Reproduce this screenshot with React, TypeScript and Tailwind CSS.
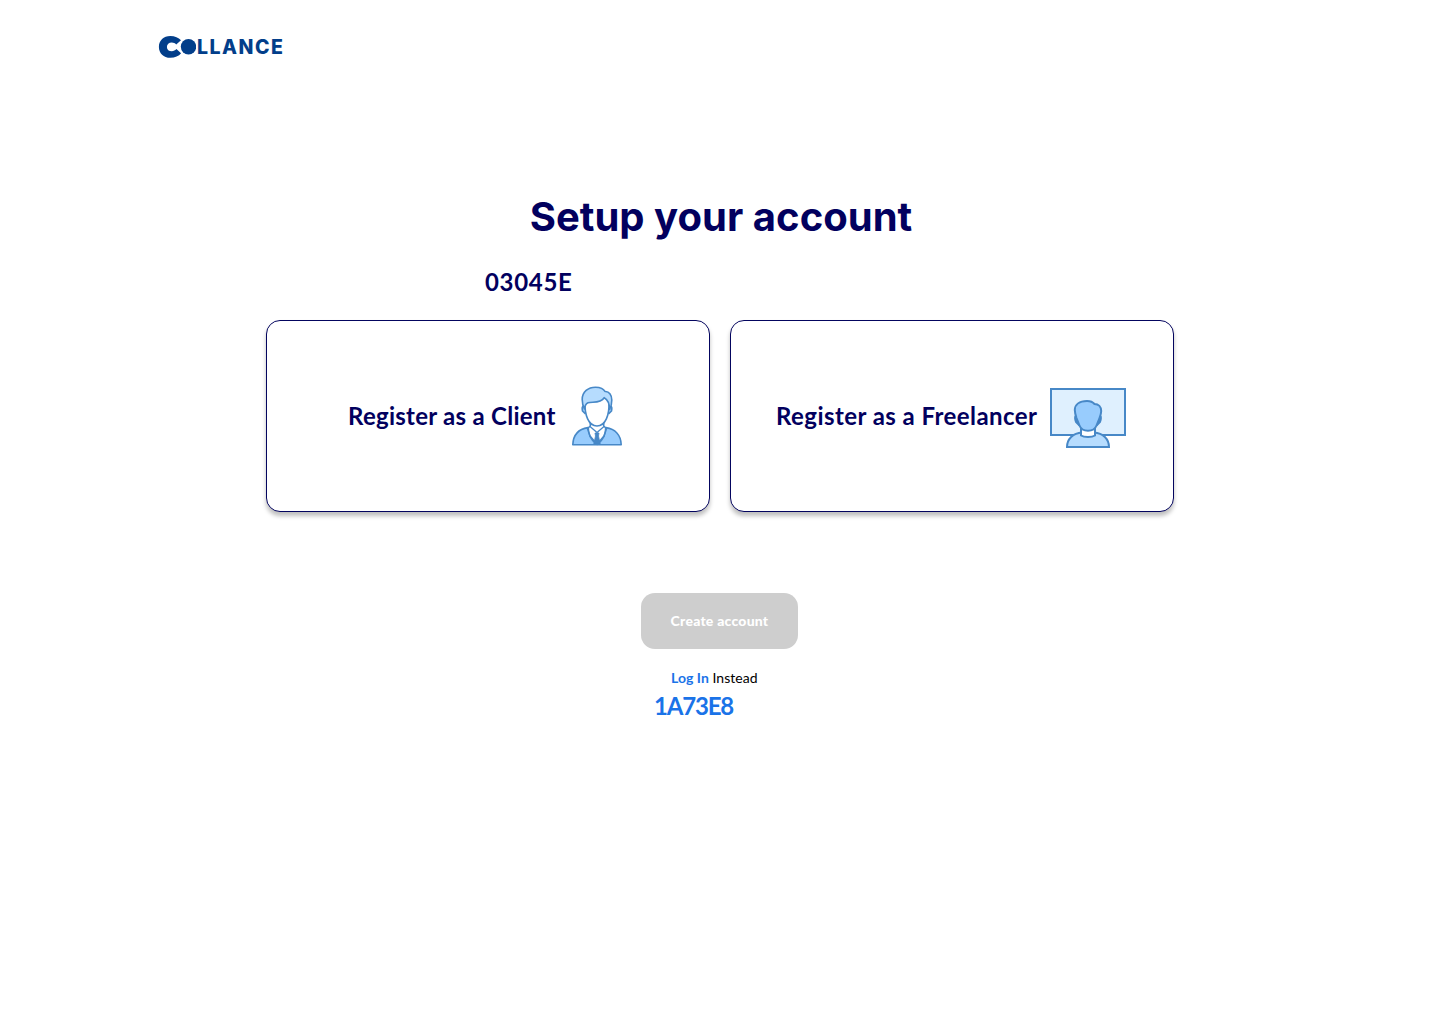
function Logo() {
  return (
    <div className="flex h-6 items-center text-[#023e8a]" aria-label="Collance">
      <svg width="38" height="24" viewBox="0 0 38 24" fill="currentColor">
        <path d="M23 5.200C20.600 2.700 16.900 1 12.300 1 5.600 1 .9 5.600.9 11.900s4.700 10.900 11.400 10.900c4.700 0 8.500-1.700 10.800-4.500l-4.700-4.200c-1.300 1.300-2.800 2.200-4.600 2.200-2.900 0-4.900-1.900-4.900-4.400s2-4.400 4.900-4.400c1.800 0 3.200.7 4.400 1.900z" />
        <circle cx="30.500" cy="11.700" r="8.300" fill="#fff" />
        <circle cx="30.500" cy="11.700" r="7.700" />
      </svg>
      <span className="-mt-[1px] ml-[1px] font-['Inter'] text-[19.5px] leading-6 font-extrabold tracking-[1.5px]">LLANCE</span>
    </div>
  );
}

function ClientIcon() {
  return (
    <svg width="52" height="62" viewBox="571 385 52 62" stroke="#4788c7" strokeWidth="1.600" strokeLinejoin="round">
      <path d="M572.800 444.700C573.200 435 579 429 588 427.600L597 433 606 427.600C615 429 620.900 435 621.200 444.700Z" fill="#98ccfd" />
      <path d="M590.300 421V426L587.500 428.500 590 436 597 444.300 604 436 606.500 428.500 603.700 426V421Z" fill="#fff" />
      <path d="M588.500 428Q588 437 595.500 443.500M605.500 428Q606 437 598.500 443.500M590 426.500L597 432.500 604 426.500" fill="none" strokeWidth="1.300" />
      <path d="M595 433H599L598.500 436 600.200 444H593.800L595.500 436Z" fill="#4788c7" strokeWidth=".8" />
      <path d="M583.500 406Q581.500 407 582.500 411L585.500 414M610.500 406Q612.500 407 611.500 411L608.500 414" fill="#98ccfd" />
      <path d="M585 402Q587 390 597 390Q608 391 609 402C609.500 415 605.500 426 597 426S584.500 415 585 402Z" fill="#fff" />
      <path d="M584.500 409C582.800 406 582.200 403 582.200 399.500C582.200 391.800 588.200 387.200 595.500 387.200C600 387.200 603.500 388.500 605 391.500C609 391 611.800 395 611.800 400C611.800 404 611 407 609.600 409.500C609.500 403 607.500 399.500 604.200 397.700C600.500 403.500 592.500 401.500 588 402.800C585.200 404 584.800 406 584.500 409Z" fill="#b6dcfe" />
    </svg>
  );
}

function FreelancerIcon() {
  return (
    <svg width="76" height="61" viewBox="1050 388 76 61" stroke="#4788c7" strokeWidth="2">
      <path d="M1051 389H1125V435H1051Z" fill="#dff0fe" />
      <path d="M1067 447C1067 439 1073 433 1082 432.500H1094C1103 433 1109 439 1109 447Z" fill="#b6dcfe" />
      <path d="M1081 428V435.500C1084 437.500 1092 437.500 1095 435.500V428Z" fill="#fff" />
      <path d="M1075.500 416Q1074.500 418 1076 422L1079.500 425.500M1100.500 416Q1101.500 418 1100 422L1096.500 425.500" fill="#4788c7" />
      <path d="M1076.500 418C1075.500 415 1074.800 412.500 1074.800 410C1074.800 404.500 1079.500 401 1087 401C1090.500 401 1093 402.200 1094.500 404C1098.500 404 1101.200 407 1101.200 411C1101.200 413.500 1100.500 415.500 1099.500 418L1096.500 425.500C1095.200 429 1092.500 430.800 1088 430.800C1083.500 430.800 1080.800 429 1079.500 425.500Z" fill="#98ccfd" />
    </svg>
  );
}

const card =
  "flex h-48 w-[444px] items-center rounded-[14px] border border-[#03045e] bg-white font-['Lato'] text-[24px] leading-[30px] font-bold shadow-[0_4px_4px_rgba(0,0,0,0.25)]";

export default function App() {
  return (
    <div className="min-h-screen w-full bg-white font-['Lato',sans-serif] text-[#02005e]">
      <header className="flex h-[94px] pt-[35px] pl-[158px]">
        <Logo />
      </header>
      <main className="flex flex-col items-center">
        <h1 className="mt-[98px] h-[50px] pl-[2px] font-['Inter'] text-[40px] leading-[50px] font-bold tracking-[0.03px] whitespace-nowrap">
          Setup your account
        </h1>
        <div className="mt-[25px] flex h-[30px] w-[908px] pl-[219px]">
          <span className="text-[24px] leading-[30px] font-bold tracking-[0.7px]">03045E</span>
        </div>
        <div className="mt-[23px] flex gap-5">
          <button className={card}>
            <span className="ml-[81px] w-[208px] text-left tracking-[0.27px] whitespace-nowrap">Register as a Client</span>
            <span className="ml-[15px]"><ClientIcon /></span>
          </button>
          <button className={card}>
            <span className="ml-[45px] w-[262px] text-left tracking-[0.44px] whitespace-nowrap">Register as a Freelancer</span>
            <span className="mt-[5px] ml-[12px]"><FreelancerIcon /></span>
          </button>
        </div>
        <div className="mt-[81px] flex w-[158px] flex-col">
          <button className="h-14 w-[157px] rounded-[14px] bg-[#cecece] pb-[2px] text-[14px] font-black tracking-[0.23px] text-white">Create account</button>
          <p className="mt-5 ml-[30px] h-[18px] text-[14px] leading-[18px] tracking-[0.04px] whitespace-nowrap text-black">
            <a className="font-bold text-[#1a73e8]" href="#login">Log In</a> Instead
          </p>
          <span className="mt-[4px] ml-[13px] text-[24px] leading-[30px] font-bold tracking-[-1.2px] text-[#1a73e8]">1A73E8</span>
        </div>
      </main>
    </div>
  );
}
